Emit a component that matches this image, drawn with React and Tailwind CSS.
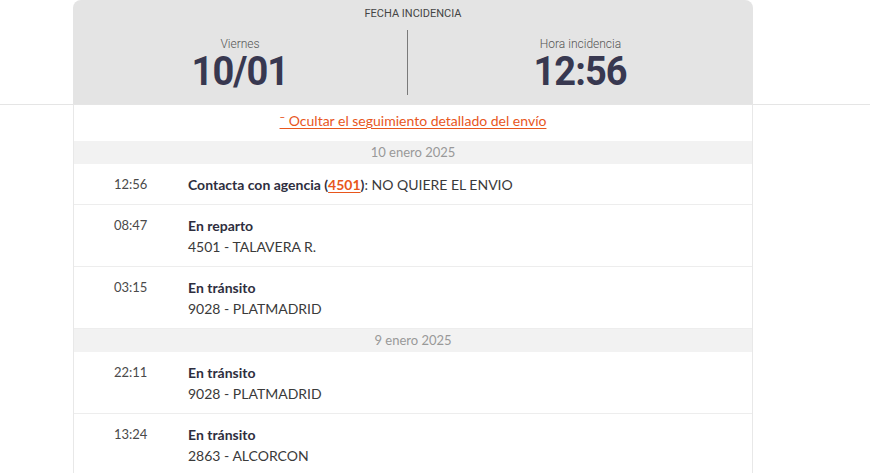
const rows = [
  { date: '10 enero 2025' },
  { time: '12:56', agency: true },
  { time: '08:47', title: 'En reparto', sub: '4501 - TALAVERA R.' },
  { time: '03:15', title: 'En tránsito', sub: '9028 - PLATMADRID' },
  { date: '9 enero 2025' },
  { time: '22:11', title: 'En tránsito', sub: '9028 - PLATMADRID' },
  { time: '13:24', title: 'En tránsito', sub: '2863 - ALCORCON' },
];

function EventRow({ ev }) {
  if (ev.date) {
    return (
      <div className="h-[23px] bg-[#f2f2f2] flex items-center justify-center text-[13px] text-[#999999]">
        {ev.date}
      </div>
    );
  }
  return (
    <div className="flex border-b border-[#ededed] pl-[40px] pt-[10px] pb-[9px] text-[14px] leading-[21px] text-[#3a3a3a]">
      <div className="w-[74px] shrink-0 text-[13px] text-[#4a4a4a]">{ev.time}</div>
      <div>
        {ev.agency ? (
          <div>
            <span className="font-bold text-[#2e2e3e]">
              Contacta con agencia (
              <a href="#" className="text-[#e8561c] underline underline-offset-2">4501</a>
              )
            </span>
            : NO QUIERE EL ENVIO
          </div>
        ) : (
          <>
            <div className="font-bold text-[#2e2e3e]">{ev.title}</div>
            <div>{ev.sub}</div>
          </>
        )}
      </div>
    </div>
  );
}

export default function App() {
  const roboto = { fontFamily: 'Roboto, sans-serif' };
  return (
    <div className="h-[473px] overflow-hidden bg-white" style={{ fontFamily: 'Lato, "Noto Sans", sans-serif' }}>
      <div className="border-b border-[#e5e5e5]">
        <div className="mx-[73px] w-[680px] h-[104px] bg-[#e4e4e4] rounded-t-[8px] flex flex-col">
          <div className="text-center text-[11px] text-[#444] pt-[7px] leading-[14px]" style={roboto}>
            FECHA INCIDENCIA
          </div>
          <div className="flex flex-1 pt-[9px] pb-[9px]">
            <div className="w-[334px] flex flex-col items-center">
              <div className="text-[12px] text-[#555] font-light leading-[14px] mt-[7px]" style={roboto}>Viernes</div>
              <div className="text-[40px] font-bold leading-[30px] mt-[6px] text-[#383850] tracking-[-1px] scale-x-[0.95]" style={roboto}>10/01</div>
            </div>
            <div className="w-px bg-[#7a7a7a]" />
            <div className="flex-1 flex flex-col items-center">
              <div className="text-[12px] text-[#555] font-light leading-[14px] mt-[7px]" style={roboto}>Hora incidencia</div>
              <div className="text-[40px] font-bold leading-[30px] mt-[6px] text-[#383850] tracking-[-1px] scale-x-[0.95]" style={roboto}>12:56</div>
            </div>
          </div>
        </div>
      </div>
      <div className="mx-[73px] w-[680px] border-x border-[#e8e8e8]">
        <div className="h-[36px] flex justify-center pt-[6px]">
          <a href="#" className="text-[14px] leading-[20px] text-[#e8561c] underline underline-offset-2">
            ˉ Ocultar el seguimiento detallado del envío
          </a>
        </div>
        {rows.map((ev, i) => (
          <EventRow key={i} ev={ev} />
        ))}
      </div>
    </div>
  );
}
